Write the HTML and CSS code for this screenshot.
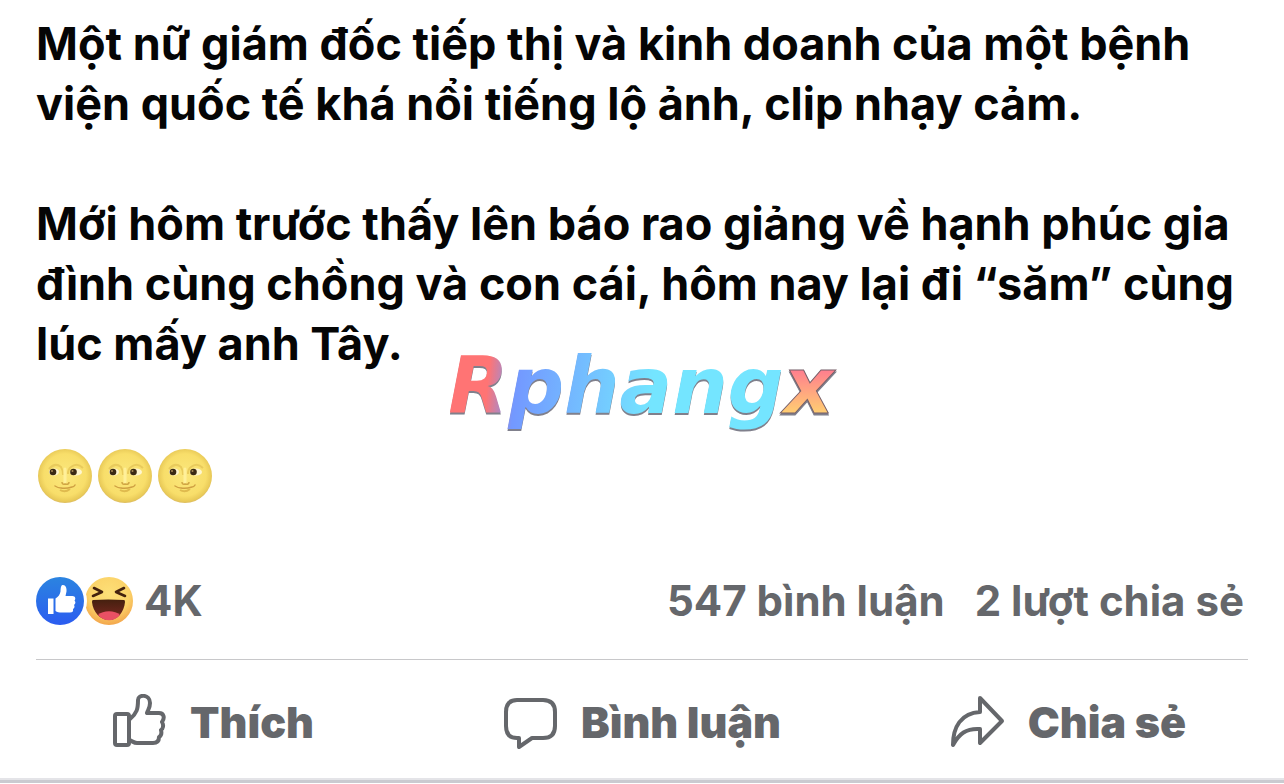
FILE: index.html
```html
<!DOCTYPE html>
<html lang="vi">
<head>
<meta charset="utf-8">
<meta name="viewport" content="width=device-width, initial-scale=1">
<title>Bài viết</title>
<link rel="stylesheet" href="styles.css">
</head>
<body>
<svg class="defs" width="0" height="0" aria-hidden="true">
  <defs>
    <radialGradient id="moonFill" cx="50%" cy="48%" r="52%">
      <stop offset="0" stop-color="#fbe77c"/><stop offset=".75" stop-color="#f8de6a"/><stop offset=".94" stop-color="#e9ca58"/><stop offset="1" stop-color="#dcbc62"/>
    </radialGradient>
    <linearGradient id="likeFill" x1="0" y1="0" x2="0" y2="1">
      <stop offset="0" stop-color="#2b84e0"/><stop offset="1" stop-color="#2b5cf0"/>
    </linearGradient>
    <radialGradient id="hahaFill" cx="50%" cy="35%" r="65%">
      <stop offset="0" stop-color="#fde078"/><stop offset=".65" stop-color="#fbd268"/><stop offset="1" stop-color="#f3a64c"/>
    </radialGradient>
    <linearGradient id="mouthFill" x1="0" y1="0" x2="0" y2="1">
      <stop offset="0" stop-color="#45200f"/><stop offset="1" stop-color="#7c2822"/>
    </linearGradient>
    <linearGradient id="wordFill" gradientUnits="userSpaceOnUse" x1="0" y1="60" x2="400" y2="100">
      <stop offset=".11" stop-color="#ff7474"/><stop offset=".18" stop-color="#7398ff"/><stop offset=".45" stop-color="#74d5ff"/><stop offset=".52" stop-color="#74e5ff"/>
    </linearGradient>
    <linearGradient id="tailFill" gradientUnits="userSpaceOnUse" x1="0" y1="34" x2="0" y2="80">
      <stop offset="0" stop-color="#ff7890"/><stop offset="1" stop-color="#ffce72"/>
    </linearGradient>
    <symbol id="moon" viewBox="0 0 54 54">
      <circle cx="27" cy="27" r="27" fill="url(#moonFill)"/>
      <path d="M11 20q6-7 12-2 2 3 2 8M30 25q0-5 3-7 6-5 12 1" fill="none" stroke="#e9cb5c" stroke-width="2"/>
      <ellipse cx="16" cy="23" rx="5" ry="3.4" fill="#fff6d0"/>
      <ellipse cx="38" cy="23" rx="6" ry="3.6" fill="#fff6d0"/>
      <circle cx="15" cy="23" r="3.3" fill="#3b2a13"/>
      <circle cx="35.500" cy="23" r="3.300" fill="#3b2a13"/>
      <circle cx="14" cy="22" r="1" fill="#a98b58"/><circle cx="34.500" cy="22" r="1" fill="#a98b58"/>
      <path d="M27 20v13" stroke="#fff09a" stroke-width="3" stroke-linecap="round"/>
      <path d="M24 33q0 3 3 2 4 1 4-2" fill="none" stroke="#d0a544" stroke-width="1.500"/>
      <path d="M17 37q3 2 6 2 5 1 11-1 2 0 3-2" fill="none" stroke="#cfa043" stroke-width="1.500" stroke-linecap="round"/>
      <path d="M22 41q5 3 10-1" fill="none" stroke="#dfba4e" stroke-width="2"/>
    </symbol>
  </defs>
</svg>
<article class="post">
  <div class="message">
    <p>Một nữ giám đốc tiếp thị và kinh doanh của một bệnh viện quốc tế khá nổi tiếng lộ ảnh, clip nhạy cảm.</p>
    <p>Mới hôm trước thấy lên báo rao giảng về hạnh phúc gia đình cùng chồng và con cái, hôm nay lại đi “săm” cùng lúc mấy anh Tây.</p>
    <div class="moons" role="img" aria-label="Ba mặt trăng tròn">
      <svg><use href="#moon"/></svg><svg><use href="#moon"/></svg><svg><use href="#moon"/></svg>
    </div>
    <svg class="watermark" viewBox="0 0 400 120"><text x="199" y="80" text-anchor="middle" fill="url(#wordFill)">Rphang<tspan class="tail" fill="url(#tailFill)">x</tspan></text></svg>
  </div>
  <div class="stats">
    <div class="reactions">
      <svg class="faces" viewBox="0 0 98 48" aria-hidden="true">
        <circle cx="73" cy="24" r="24" fill="url(#hahaFill)"/>
        <path d="M58 11l8 4-9 4M88 11l-8 4 9 4" fill="none" stroke="#44220e" stroke-width="2.600" stroke-linejoin="round" stroke-linecap="round"/>
        <path d="M57 23q15-1 31 0 1 0 1 2c-1 10-7 18-16 18s-16-8-17-18q0-2 1-2z" fill="url(#mouthFill)"/>
        <path d="M62 38c5-5 17-5 22 0-6 7-16 7-22 0z" fill="#e95064"/>
        <circle cx="24" cy="24" r="27" fill="#fff"/>
        <circle cx="24" cy="24" r="24" fill="url(#likeFill)"/>
        <path d="M12 21.500h5.500V37H12zM19.500 21.500c3-2 4.500-4 5-7 .2-3 .3-6 2-6.500 3-.5 4.500 3 4 6.500l-1 4.500h7c3 0 3.500 3 2 4.500 1.500 1.500 1 3.500-.5 4.500 1 1.500.5 3-1 4 .5 2.500-.5 3.500-3 3.500h-8c-3 0-5-.5-6.500-1.500z" fill="#fff"/>
      </svg>
      <span>4K</span>
    </div>
    <div class="counts"><a href="#comments">547 bình luận</a><a href="#shares">2 lượt chia sẻ</a></div>
  </div>
  <div class="actions">
    <button type="button">
      <svg viewBox="0 0 56 56" aria-hidden="true"><path d="M3 22q0-2 2-2h10q2 0 2 2v27q0 2-2 2H5q-2 0-2-2zM18 25c7-6 8-10 8-19 0-6 12-6 12 3 0 5-2 7-3 10h12c5 0 6 5 3 9 2 3 1 7-1 8 1 4 0 6-2 7 0 4-2 6-6 6H25c-3 0-5-2-8-3"/></svg>
      <span>Thích</span>
    </button>
    <button type="button">
      <svg viewBox="0 0 56 56" aria-hidden="true"><path d="M14 6h26q12 0 12 12v14q0 12-12 12H29L16 53v-9h-2Q3 44 3 32V18Q3 6 14 6z"/></svg>
      <span>Bình luận</span>
    </button>
    <button type="button">
      <svg viewBox="0 0 56 56" aria-hidden="true"><path d="M30 4l22 23-22 22V35C16 34 9 40 3 51 3 33 11 19 30 18z"/></svg>
      <span>Chia sẻ</span>
    </button>
  </div>
</article>
</body>
</html>
```
FILE: styles.css
```css
* { box-sizing: border-box; }

body {
  margin: 0;
  background: #fff;
  color: #050505;
  font-family: Inter, "Liberation Sans", sans-serif;
}

.defs { position: absolute; }

.post {
  padding-top: 14px;
  border-bottom: 3px solid #cacad0;
  box-shadow: inset 0 -2px 0 #e4e4e8;
}

.message {
  position: relative;
  padding: 0 36px;
  font-size: 45px;
  font-weight: 650;
  line-height: 60px;
}

.message p { margin: 0 0 60px; }

.moons {
  display: flex;
  gap: 6px;
  padding: 15px 2px 0;
}

.moons svg { width: 54px; height: 54px; }

.watermark {
  position: absolute;
  left: calc(50% - 200px);
  top: 319px;
  width: 400px;
  height: 120px;
  font: italic 700 78px "DejaVu Sans", sans-serif;
  filter: drop-shadow(0 2px 0 #80808c);
}

.tail { stroke: #77606a; stroke-width: 1px; }

.stats {
  display: flex;
  align-items: center;
  justify-content: space-between;
  margin: 74px 36px 0;
  padding-bottom: 34px;
  border-bottom: 1px solid #c8c8ca;
  color: #65676b;
  font-size: 42px;
  font-weight: 700;
  line-height: 48px;
}

.reactions { display: flex; gap: 10px; }
.faces { width: 98px; height: 48px; }

.counts {
  display: flex;
  gap: 30px;
  padding-right: 4px;
}

.counts a { color: inherit; text-decoration: none; }

.actions {
  display: grid;
  grid-template-columns: 1fr auto 1fr;
  padding: 32px 98px 28px;
}

.actions button {
  display: flex;
  align-items: center;
  gap: 22px;
  padding: 0;
  border: 0;
  background: none;
  color: #65676b;
  font: 900 43px/60px Inter, "Liberation Sans", sans-serif;
}

.actions button:first-child { padding-left: 14px; }
.actions button:last-child { justify-self: end; }

.actions svg {
  width: 56px;
  height: 56px;
  fill: none;
  stroke: currentColor;
  stroke-width: 4;
  stroke-linejoin: round;
}
```
